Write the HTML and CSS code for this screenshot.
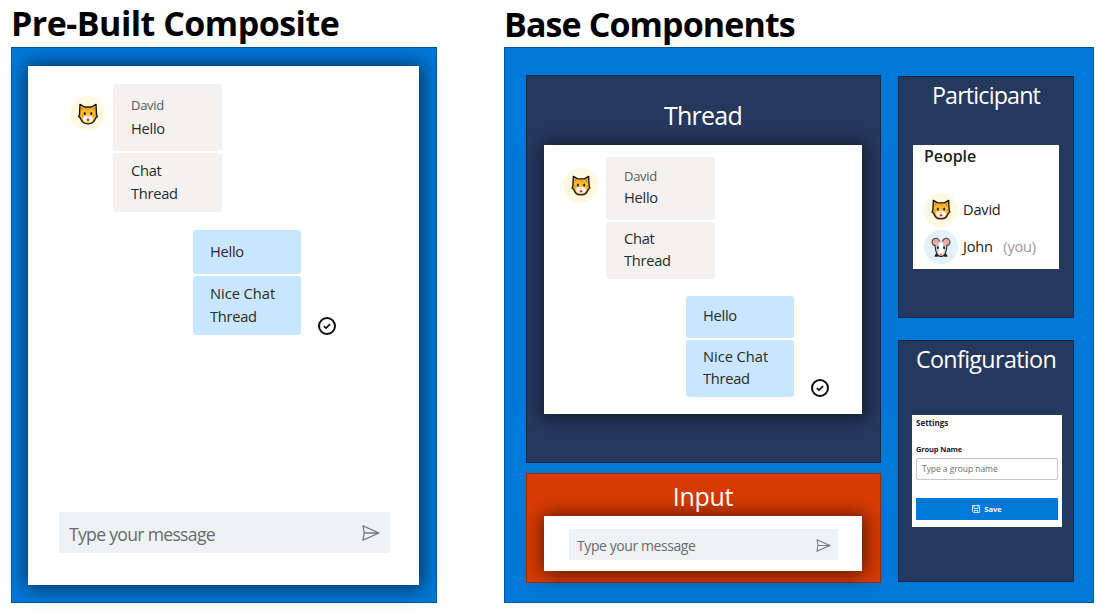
FILE: index.html
```html
<!DOCTYPE html>
<html lang="en">
<head>
<meta charset="utf-8">
<title>UI Components</title>
<link rel="stylesheet" href="styles.css">
</head>
<body>
<svg class="defs" aria-hidden="true">
  <symbol id="cat" viewBox="0 0 20 22">
    <path d="M2 1.400 6.500 4h7L18 1.400l.5 9.800.8 2.400-1.600 1.300C16.600 18.500 13.500 20.900 10 20.900S3.400 18.500 2.300 14.900L.7 13.600l.8-2.400z" fill="#fdbb2f" stroke="#17140f" stroke-width="1.400" stroke-linejoin="round"/>
    <path d="M3.200 3.600 6 5.300 3.400 8zM16.800 3.600 14 5.300 16.600 8z" fill="#e08a20"/>
    <path d="M10 4.700v3.200M7.600 4.900l.5 2.100M12.400 4.900l-.5 2.100M2.500 12.200l2 .4M17.500 12.200l-2 .4" stroke="#cf851c" stroke-width=".9"/>
    <ellipse cx="10" cy="15.800" rx="5" ry="3.400" fill="#fff"/>
    <ellipse cx="6.700" cy="10.600" rx="1" ry="1.700" fill="#17140f"/>
    <ellipse cx="13.300" cy="10.600" rx="1" ry="1.700" fill="#17140f"/>
    <path d="M8.900 13.600h2.200L10 14.800z" fill="#f08a80"/>
    <ellipse cx="10" cy="17" rx="1.400" ry="1.400" fill="#f0263d"/>
  </symbol>
  <symbol id="mouse" viewBox="0 0 20 22">
    <path d="M5.200 18 3.900 20h2.500zM14.800 18 16.100 20h-2.500z" fill="#333" stroke="#222" stroke-width="1.400" stroke-linejoin="round"/>
    <path d="M3.800 8h12.400l-.6 5.500c-.7 3.800-3 6.900-5.600 6.900s-4.900-3.100-5.600-6.900z" fill="#b9bcc1" stroke="#24262a" stroke-width="1.300"/>
    <circle cx="4.600" cy="5.300" r="3.900" fill="#fba7a0" stroke="#56595e" stroke-width="1.400"/>
    <circle cx="15.400" cy="5.300" r="3.900" fill="#fba7a0" stroke="#56595e" stroke-width="1.400"/>
    <path d="M4.500 9.800C5.600 6.300 7.700 4.500 10 4.500s4.400 1.800 5.500 5.300l-.5 4c-.8 3.300-2.700 5.900-5 5.900s-4.200-2.600-5-5.900z" fill="#c3c6ca"/>
    <path d="M8.400 5.800h3.200l1.300 8-.5 4.200-2.400 1.300L7.600 18l-.5-4.200z" fill="#fff"/>
    <ellipse cx="6.800" cy="11.300" rx=".9" ry="1.500" fill="#111"/>
    <ellipse cx="13.200" cy="11.300" rx=".9" ry="1.500" fill="#111"/>
    <circle cx="10" cy="18.600" r="1.400" fill="#ef6f6c"/>
  </symbol>
  <symbol id="seen" viewBox="0 0 20 20">
    <circle cx="10" cy="10" r="8" fill="none" stroke="#111" stroke-width="2"/>
    <path d="m6.800 10.200 2.200 2 4.100-4.100" fill="none" stroke="#111" stroke-width="1.700"/>
  </symbol>
  <symbol id="send" viewBox="0 0 18 16">
    <path d="M1 .8 17 8 1 15.200 2.200 8zM2.200 8H17" fill="none" stroke="#777b7e" stroke-width="1.300" stroke-linejoin="round"/>
  </symbol>
  <symbol id="save" viewBox="0 0 8 8">
    <path d="M.5.5h7v7h-6l-1-1zM2 .5v3h4v-3M2.300 7.500v-2h3.400v2" fill="none" stroke="#fff" stroke-width=".8"/>
  </symbol>
</svg>
<main class="page">
  <section class="column composite">
    <h1 class="heading"><span class="heading-left">Pre-Built Composite</span></h1>
    <div class="panel composite-panel">
      <div class="card chat">
        <div class="messages">
          <div class="row">
            <div class="avatar"><svg class="face"><use href="#cat"/></svg></div>
            <div class="stack">
              <div class="bubble tall"><span class="author">David</span><span class="t-hello">Hello</span></div>
              <div class="bubble pair"><span class="t-chat">Chat</span><span class="t-thread">Thread</span></div>
            </div>
          </div>
          <div class="row mine">
            <div class="stack">
              <div class="bubble single"><span class="t-hello">Hello</span></div>
              <div class="bubble pair"><span class="t-nice">Nice Chat</span><span class="t-thread">Thread</span></div>
            </div>
            <svg class="seen"><use href="#seen"/></svg>
          </div>
        </div>
        <div class="field"><span class="field-text">Type your message</span><svg class="send"><use href="#send"/></svg></div>
      </div>
    </div>
  </section>
  <section class="column base">
    <h1 class="heading heading-low"><span class="heading-right">Base Components</span></h1>
    <div class="panel base-panel">
      <div class="main-col">
        <div class="tile thread-tile">
          <h2 class="title"><span class="title-thread">Thread</span></h2>
          <div class="card chat compact">
            <div class="messages">
              <div class="row">
                <div class="avatar"><svg class="face"><use href="#cat"/></svg></div>
                <div class="stack">
                  <div class="bubble tall"><span class="author">David</span><span class="t-hello">Hello</span></div>
                  <div class="bubble pair"><span class="t-chat">Chat</span><span class="t-thread">Thread</span></div>
                </div>
              </div>
              <div class="row mine">
                <div class="stack">
                  <div class="bubble single"><span class="t-hello">Hello</span></div>
                  <div class="bubble pair"><span class="t-nice">Nice Chat</span><span class="t-thread">Thread</span></div>
                </div>
                <svg class="seen"><use href="#seen"/></svg>
              </div>
            </div>
          </div>
        </div>
        <div class="tile input-tile">
          <h2 class="title"><span class="title-input">Input</span></h2>
          <div class="card input-card">
            <div class="field small"><span class="field-text">Type your message</span><svg class="send"><use href="#send"/></svg></div>
          </div>
        </div>
      </div>
      <div class="side-col">
        <div class="tile side-tile">
          <h2 class="title side-title"><span class="title-participant">Participant</span></h2>
          <div class="people">
            <h3 class="people-title"><span>People</span></h3>
            <div class="person"><div class="avatar"><svg class="face"><use href="#cat"/></svg></div><span class="name">David</span></div>
            <div class="person"><div class="avatar blue"><svg class="face"><use href="#mouse"/></svg></div><span class="name">John</span><span class="you">(you)</span></div>
          </div>
        </div>
        <div class="tile side-tile">
          <h2 class="title side-title"><span class="title-config">Configuration</span></h2>
          <div class="settings">
            <h3 class="settings-title">Settings</h3>
            <div class="label">Group Name</div>
            <div class="text-input">Type a group name</div>
            <div class="button"><svg class="save"><use href="#save"/></svg><span>Save</span></div>
          </div>
        </div>
      </div>
    </div>
  </section>
</main>
</body>
</html>
```
FILE: styles.css
```css
* { box-sizing: border-box; }
body { margin: 0; background: #fff; font-family: "Open Sans", "Noto Sans", sans-serif; white-space: nowrap; }
h1, h2, h3 { margin: 0; font-weight: 400; }
svg { display: block; flex: none; }
.defs { display: none; }
.page { width: 1106px; height: 614px; display: flex; gap: 67px; padding: 0 12px 0 11px; overflow: hidden; }
.column { display: flex; flex-direction: column; }
.composite { width: 426px; }
.base { width: 590px; }
.heading { height: 47px; font-size: 34px; font-weight: 700; line-height: 46px; color: #000; }
.heading-low { line-height: 48px; }
.heading-left { letter-spacing: -.52px; }
.heading-right { letter-spacing: -.9px; }
.panel { height: 556px; background: #0078d7; border: 1px solid #00559b; }
.composite-panel { padding: 18px 17px 17px 16px; }
.base-panel { display: flex; gap: 17px; padding: 27px 19px 0 21px; }
.card { background: #fff; box-shadow: 1px 1px 18px 2px rgba(0, 0, 0, .62); }

.chat { --line: 22.6px; --h-tall: 66.500px; --h-pair: 59px; --h-single: 43.500px; height: 519px; display: flex; flex-direction: column; justify-content: space-between; padding: 18px 29px 32px 31px; }
.compact { --line: 21.700px; --h-tall: 63px; --h-pair: 56.500px; --h-single: 41.500px; height: 269px; padding: 11.500px 0 0 18px; }
.messages { display: flex; flex-direction: column; gap: 18px; padding-left: 11px; }
.compact .messages { padding-left: 1px; gap: 17.500px; }
.row { display: flex; gap: 8px; }
.avatar { flex: none; width: 35px; height: 35px; border-radius: 50%; background: #fff9e2; display: flex; align-items: center; justify-content: center; }
.row .avatar { margin-top: 12px; }
.compact .avatar { margin-top: 11px; }
.face { width: 20px; height: 22px; }
.compact .face, .person .face { height: 21px; }
.stack { display: flex; flex-direction: column; gap: 2.500px; width: 109px; }
.bubble { display: flex; flex-direction: column; padding: 6px 0 0 18px; border-radius: 3px; background: #f3f2f1; font-size: 14.700px; line-height: var(--line); color: #2b2a29; }
.tall { height: var(--h-tall); padding-top: 10px; }
.compact .tall { padding-top: 9.200px; }
.compact .bubble:not(.tall) { padding-top: 5.800px; }
.pair { height: var(--h-pair); }
.single { height: var(--h-single); padding-top: 10px; }
.compact .bubble.single { padding-top: 9.400px; }
.author { font-size: 13px; color: #5c5a58; letter-spacing: -.3px; }
.mine { padding-left: 122.500px; align-items: flex-end; gap: 16px; }
.mine .stack { width: 108.500px; }
.mine .bubble { background: #c9e6ff; padding-left: 17.500px; }
.t-hello, .t-thread, .t-chat { letter-spacing: -.3px; }
.t-nice { letter-spacing: -.05px; }
.seen { width: 20px; height: 20px; margin-bottom: -1px; }

.field { height: 41px; width: 331px; background: #edf2f5; display: flex; align-items: center; justify-content: space-between; padding: 2px 10px 0 10px; font-size: 17.600px; color: #6b6a69; }
.field-text { letter-spacing: -.7px; line-height: 36px; }
.field .send { width: 18px; height: 16px; margin-top: -2px; }
.small { width: 269px; height: 31px; padding: 2px 7px 0 8px; font-size: 14px; }
.small .field-text { letter-spacing: -.42px; line-height: 28px; }
.small .send { width: 15px; height: 13px; margin-top: -1px; }

.main-col { width: 355px; display: flex; flex-direction: column; gap: 10px; }
.side-col { width: 176px; display: flex; flex-direction: column; gap: 22px; padding-top: 1px; }
.tile { background: #25395f; border: 1px solid #172a46; }
.thread-tile { height: 388px; padding: 23px 18px 0 17px; }
.input-tile { height: 110px; background: #d83b01; border-color: #9b2b02; padding: 6px 18px 0 17px; }
.title { color: #fff; font-size: 25px; text-align: center; line-height: 34px; }
.thread-tile .title { height: 46px; line-height: 33px; }
.input-tile .title { height: 36px; line-height: 33px; }
.title-thread { letter-spacing: -.75px; }
.title-input { letter-spacing: -.3px; }
.input-card { height: 55px; padding: 13px 0 0 25px; }
.side-tile { height: 242px; }
.side-title { font-size: 23.300px; line-height: 36px; height: 68px; }
.title-participant { letter-spacing: -.85px; }
.title-config { letter-spacing: -.65px; }

.people { width: 146px; height: 124px; margin-left: 14px; padding-left: 11px; background: #fff; color: #222; }
.people-title { font-size: 16px; font-weight: 600; line-height: 23px; height: 46px; letter-spacing: -.05px; }
.person { display: flex; align-items: center; height: 37.500px; font-size: 14.600px; line-height: 20px; }
.person .avatar { width: 34px; height: 34px; margin-right: 5px; }
.person .name, .person .you { letter-spacing: -.2px; margin-top: -2px; }
.blue { background: #e5f1fa; }
.person .you { margin-left: 10.500px; color: #999; }

.settings { width: 150px; height: 112px; margin: 6px 0 0 13px; padding: 0 4px; background: #fff; color: #222; font-size: 7.500px; }
.settings-title { font-size: 8px; font-weight: 700; line-height: 15px; height: 27px; }
.label { font-weight: 700; line-height: 15px; height: 16px; letter-spacing: -.15px; }
.text-input { height: 22px; border: 1px solid #c8c8c8; border-radius: 2px; padding-left: 5px; line-height: 20px; font-size: 8.500px; letter-spacing: -.05px; color: #707070; }
.button { height: 22px; margin-top: 18px; background: #0078d7; color: #fff; font-weight: 700; display: flex; align-items: center; justify-content: center; gap: 4px; }
.save { width: 8px; height: 8px; }
```
